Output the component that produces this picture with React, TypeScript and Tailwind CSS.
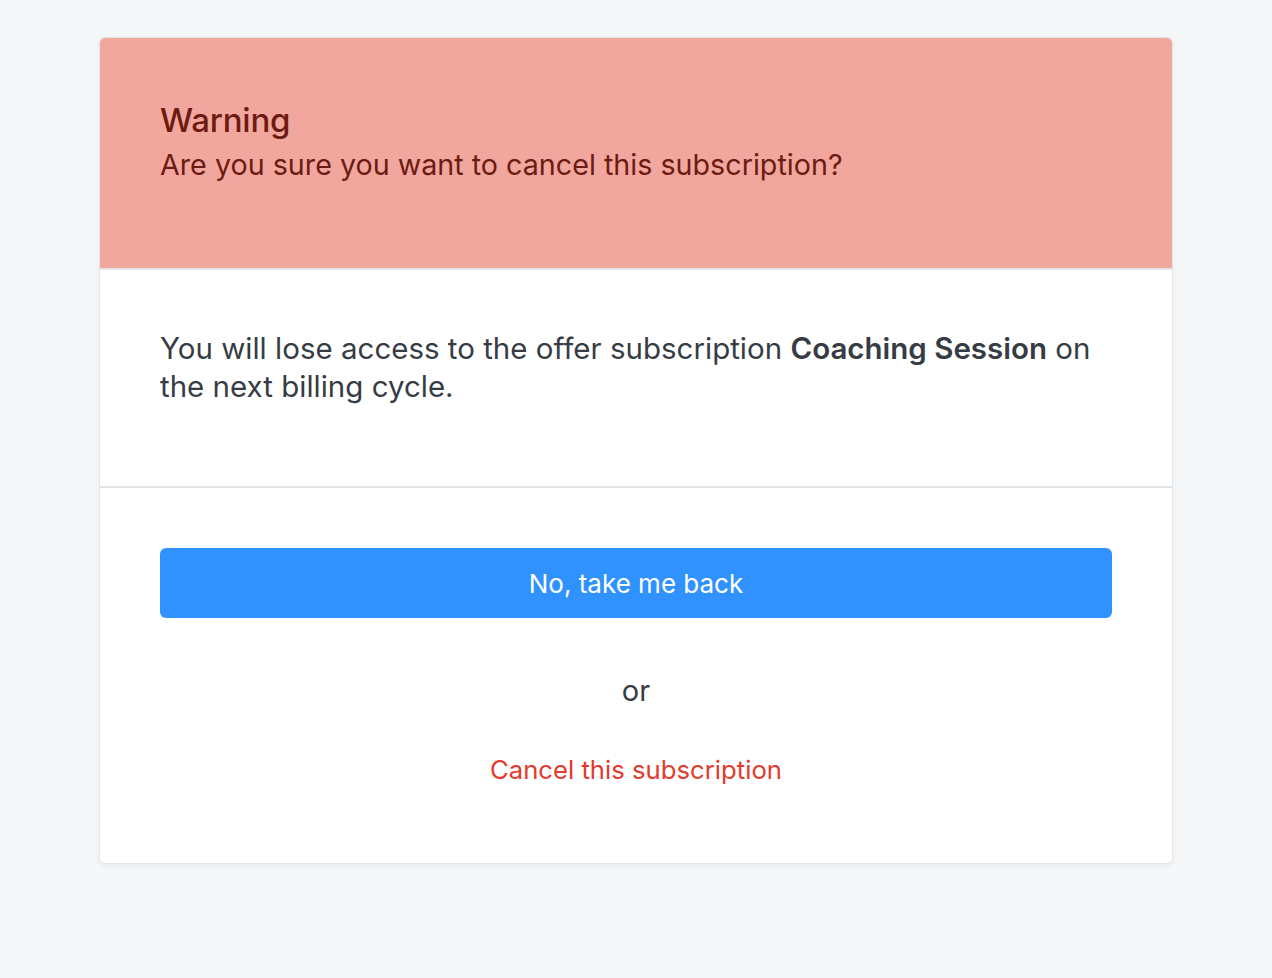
import React from "react";

export default function App() {
  return (
    <div
      className="min-h-[978px] w-full bg-[#f6f7f9] pt-[37px]"
      style={{ fontFamily: "Inter, 'Noto Sans', sans-serif" }}
    >
      <div className="mx-[99px] overflow-hidden rounded-[6px] border border-[#e2e5e9] bg-white shadow-[0_2px_6px_rgba(0,0,0,0.06)]">
        <div className="h-[232px] border-b-2 border-[#e3e6ea] bg-[#f1a79e] px-[60px] pt-[62px] text-[#6d1b11]">
          <div className="text-[33px] font-medium leading-[40px] tracking-[-0.2px]">Warning</div>
          <div className="mt-[5px] text-[28.7px] leading-[40px]">
            Are you sure you want to cancel this subscription?
          </div>
        </div>
        <div className="h-[218px] border-b-2 border-[#e3e6ea] px-[60px] pt-[59px] text-[#373c44]">
          <p className="text-[29.5px] leading-[38px]">
            You will lose access to the offer subscription{" "}
            <span className="font-semibold">Coaching Session</span> on the next billing cycle.
          </p>
        </div>
        <div className="flex flex-col items-center px-[60px] pb-[76px] pt-[60px]">
          <button className="flex h-[70px] w-full items-center justify-center rounded-[6px] bg-[#2f92ff] text-[26px] text-white">
            No, take me back
          </button>
          <div className="mt-[55px] text-[29px] leading-[36px] text-[#373c44]">or</div>
          <button className="mt-[44px] text-[25.7px] leading-[34px] text-[#e33b2c]">
            Cancel this subscription
          </button>
        </div>
      </div>
    </div>
  );
}
